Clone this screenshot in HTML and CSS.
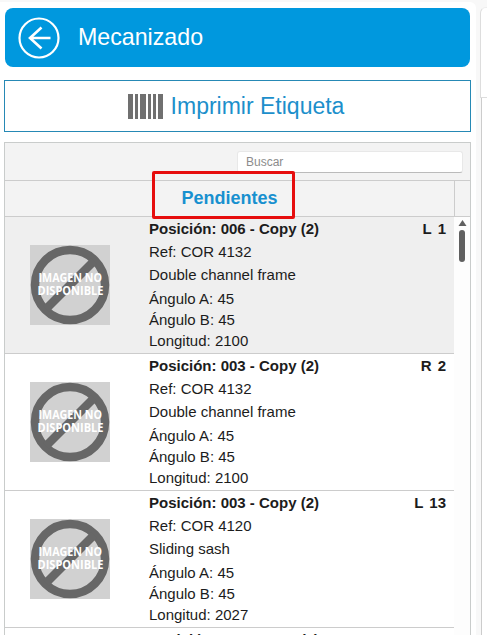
FILE: index.html
```
<!DOCTYPE html>
<html lang="es">
<head>
<meta charset="utf-8">
<title>Mecanizado</title>
<link rel="stylesheet" href="styles.css">
</head>
<body>
<svg class="defs" width="0" height="0">
  <symbol id="no-image" viewBox="0 0 80 80">
    <rect width="80" height="80" fill="#d1d1d1"/>
    <g fill="none" stroke="#676767">
      <circle cx="40" cy="40" r="35" stroke-width="8.5"/>
      <path d="M64 16 16 64" stroke-width="8.5"/>
    </g>
    <g fill="#fff" font-family="Open Sans, sans-serif" font-weight="700" font-size="11.5">
      <text x="8.5" y="37.3" textLength="63.5" lengthAdjust="spacingAndGlyphs">IMAGEN NO</text>
      <text x="7.5" y="50.2" textLength="66" lengthAdjust="spacingAndGlyphs">DISPONIBLE</text>
    </g>
  </symbol>
</svg>
<div class="app">
  <main class="panel">
    <header class="title-bar">
      <svg class="back" viewBox="0 0 42 42" fill="none" stroke="#fff">
        <circle cx="21" cy="21" r="19.5" stroke-width="2.2"/>
        <path d="M32.500 21H12M23.500 10.500 12 21l11.500 10.500" stroke-width="2.6"/>
      </svg>
      <h1>Mecanizado</h1>
    </header>
    <button class="print">
      <svg class="barcode" viewBox="0 0 35 25" fill="#707070">
        <path d="M0 0h5v25H0zM7 0h3v25H7zM12 0h6v25h-6zM20 0h3v25h-3zM25 0h3v25h-3zM30 0h5v25h-5z"/>
      </svg>
      <span>Imprimir Etiqueta</span>
    </button>
    <section class="grid">
      <div class="toolbar"><input class="search" type="text" placeholder="Buscar"></div>
      <div class="heading">
        <div class="heading-cell"><span>Pendientes</span><i class="highlight"></i></div>
        <div class="heading-end"></div>
      </div>
      <div class="body">
        <div class="rows">
          <article class="row selected">
            <svg class="thumb"><use href="#no-image"/></svg>
            <div class="info"><b>Posición: 006 - Copy (2)</b><p>Ref: COR 4132</p><p>Double channel frame</p>
              <div class="dims"><p>Ángulo A: 45</p><p>Ángulo B: 45</p><p>Longitud: 2100</p></div></div>
            <b class="count"><span>L</span><span>1</span></b>
          </article>
          <article class="row">
            <svg class="thumb"><use href="#no-image"/></svg>
            <div class="info"><b>Posición: 003 - Copy (2)</b><p>Ref: COR 4132</p><p>Double channel frame</p>
              <div class="dims"><p>Ángulo A: 45</p><p>Ángulo B: 45</p><p>Longitud: 2100</p></div></div>
            <b class="count"><span>R</span><span>2</span></b>
          </article>
          <article class="row">
            <svg class="thumb"><use href="#no-image"/></svg>
            <div class="info"><b>Posición: 003 - Copy (2)</b><p>Ref: COR 4120</p><p>Sliding sash</p>
              <div class="dims"><p>Ángulo A: 45</p><p>Ángulo B: 45</p><p>Longitud: 2027</p></div></div>
            <b class="count"><span>L</span><span>13</span></b>
          </article>
          <article class="row">
            <div class="thumb"></div>
            <div class="info"><b>Posición: 006 - Copy (2)</b></div>
            <b class="count"><span>L</span><span>10</span></b>
          </article>
        </div>
        <div class="scroll">
          <svg width="9" height="6" viewBox="0 0 9 6"><path d="M4.500 0 8.500 6h-8z" fill="#606060"/></svg>
          <div class="handle"></div>
        </div>
      </div>
    </section>
  </main>
  <aside class="side"><div class="side-title"></div><div class="side-body"></div></aside>
</div>
</body>
</html>
```

FILE: styles.css
```
* { box-sizing: border-box; }
body {
  margin: 0;
  height: 635px;
  overflow: hidden;
  background: #f8f8f8;
  color: #1c1c1c;
  font-family: "Liberation Sans", Arial, sans-serif;
}
p, h1 { margin: 0; }
.defs { display: block; height: 0; }
.app { display: flex; height: 635px; padding-top: 2px; overflow: hidden; }
.panel {
  flex: none;
  width: 476px;
  height: 633px;
  padding: 6px 5px 0 4px;
  background: #fff;
  border-top-right-radius: 6px;
  display: flex;
  flex-direction: column;
}
.title-bar {
  flex: none;
  display: flex;
  align-items: center;
  gap: 18px;
  height: 59px;
  margin: 0 1px;
  padding-left: 13px;
  border-radius: 8px;
  background: #0098de;
  color: #fff;
}
.back { width: 42px; height: 42px; }
h1 { font-size: 23.2px; font-weight: 400; line-height: 30px; margin-top: -2px; }
.print {
  flex: none;
  display: flex;
  align-items: center;
  justify-content: center;
  gap: 8px;
  height: 52px;
  margin: 13px 0 10px;
  padding: 0 3px 0 0;
  border: 1px solid #2689b5;
  background: #fff;
  color: #1c8fcb;
  font: 23px/30px "Liberation Sans", Arial, sans-serif;
}
.barcode { width: 35px; height: 25px; }
.grid {
  flex: 1;
  min-height: 0;
  display: flex;
  flex-direction: column;
  border: solid #c9cccb;
  border-width: 1px 1px 0;
}
.toolbar {
  flex: none;
  display: flex;
  justify-content: flex-end;
  align-items: flex-start;
  height: 38px;
  padding: 8px 7px 0 0;
  background: #f3f3f3;
  border-bottom: 1px solid #ccc;
}
.search {
  width: 226px;
  height: 22px;
  padding: 0 8px;
  border: 1px solid #e8e8e8;
  border-bottom-color: #bbb;
  border-radius: 3px;
  background: #fff;
  font: 12px "Liberation Sans", Arial, sans-serif;
}
.search::placeholder { color: #8c8c8c; }
.heading {
  flex: none;
  display: flex;
  height: 36px;
  background: #f3f3f3;
  border-bottom: 1px solid #ccc;
}
.heading-cell {
  position: relative;
  flex: 1;
  display: flex;
  align-items: center;
  justify-content: center;
  color: #1890cf;
  font-size: 18px;
  font-weight: 700;
}
.heading-end { width: 16px; border-left: 1px solid #ccc; }
.highlight {
  position: absolute;
  left: 147px;
  top: -10px;
  width: 143px;
  height: 48px;
  border: 3px solid #e60d0d;
  border-radius: 2px;
  z-index: 1;
}
.body { flex: 1; min-height: 0; display: flex; overflow: hidden; }
.rows { flex: 1; }
.row {
  display: flex;
  height: 137px;
  padding: 0 8px 0 25px;
  border-bottom: 1px solid #ccc;
  font-size: 15px;
  line-height: 23px;
}
.selected { background: #efefef; }
.thumb { flex: none; width: 80px; height: 80px; margin-top: 28px; }
.info { flex: 1; margin-left: 39px; white-space: nowrap; }
.info b { display: block; }
.dims { margin-top: 2px; line-height: 21px; }
.count { display: flex; gap: 6px; white-space: nowrap; }
.scroll {
  width: 16px;
  padding-top: 3px;
  display: flex;
  flex-direction: column;
  align-items: center;
  gap: 4px;
  background: #fdfdfd;
}
.handle { width: 6px; height: 32px; border-radius: 3px; background: #606060; }
.side {
  width: 20px;
  height: 633px;
  margin: 5px 0 0 4px;
  flex: none;
}
.side-title {
  height: 91px;
  background: #fff;
  border: 1px solid #ddd;
  border-top-color: #eee;
  border-top-left-radius: 6px;
}
.side-body { margin-left: 1px; height: 540px; background: #fff; border-left: 1px solid #ccc; }
```
